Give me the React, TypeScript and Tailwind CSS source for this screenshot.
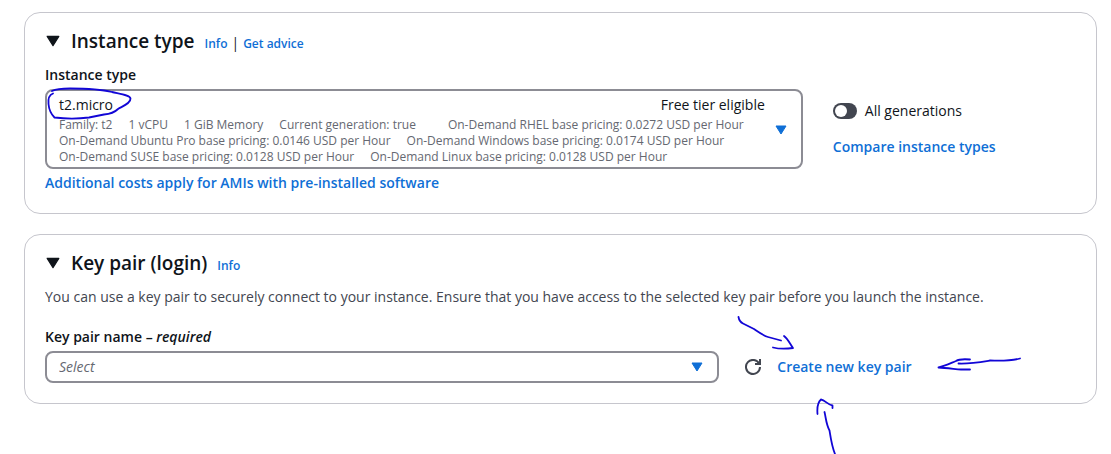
import type { ReactNode } from "react";

const linkClass = "font-semibold text-[#0f6fd6] hover:underline";

function Caret({ className }: { className: string }) {
  return (
    <svg viewBox="0 0 12 10" className={className} aria-hidden="true">
      <path d="M1 1h10L6 9z" fill="currentColor" stroke="currentColor" strokeLinejoin="round" />
    </svg>
  );
}

function Panel({ title, links, children }: { title: string; links: ReactNode; children: ReactNode }) {
  return (
    <section className="rounded-2xl border border-[#c6c6cd] bg-white px-5 pt-4 pb-5">
      <header className="flex h-6 items-center">
        <button type="button" aria-label={"Collapse " + title} className="mr-2.5 flex w-4 justify-center">
          <Caret className="h-3 w-3.5" />
        </button>
        <div className="flex items-baseline gap-2.5">
          <h2 className="text-[19px] leading-6 font-semibold">{title}</h2>
          <div className="flex items-baseline gap-1 text-xs">{links}</div>
        </div>
      </header>
      {children}
    </section>
  );
}

const specs = [
  ["Family: t2", "1 vCPU", "1 GiB Memory", "Current generation: true", "", "On-Demand RHEL base pricing: 0.0272 USD per Hour"],
  ["On-Demand Ubuntu Pro base pricing: 0.0146 USD per Hour", "On-Demand Windows base pricing: 0.0174 USD per Hour"],
  ["On-Demand SUSE base pricing: 0.0128 USD per Hour", "On-Demand Linux base pricing: 0.0128 USD per Hour"],
];

function Annotations() {
  return (
    <svg
      className="pointer-events-none absolute top-0 left-0 h-[454px] w-[1111px]"
      viewBox="0 0 1111 454"
      fill="none"
      stroke="#1206d6"
      strokeWidth="1.8"
      strokeLinecap="round"
      strokeLinejoin="round"
      aria-hidden="true"
    >
      <path d="M53 93.500C49 95 48 99 48.500 104C49 110 51 114 54.500 117.500C66 119 78 119 89 117.500L104 114.500C110 114 115 112 118 109C123 106 131 103 130.500 98.500C130 95 121 94 112 92C100 89 86 88.500 70 88.500C62 88.500 56 89 52 91" />
      <path d="M738.500 317C739 320 740 322 743 323.500L754 329C760 333 764 336 768 337L781 340.500" />
      <path d="M784 336C788 339 790 344 793 348C786 349 779 349 773 347.500" />
      <path d="M1020 358.500C1010 361 1000 361 990 360.500C981 362 970 364 958.500 363.500M970 359.500C964 359 959 359 956 361C951 363 945 366 938.500 367.500C946 368 955 369 961 369.500H970" />
      <path d="M817.500 414C817 408 818 402 821 399.500C825 400 828 405 832.500 405.500V408M824.500 412C826 418 826 424 829.500 430.500C831 440 832 447 835 454" />
    </svg>
  );
}

export default function App() {
  return (
    <main className="relative flex min-h-screen flex-col gap-5 overflow-hidden bg-white py-3 pr-3.5 pl-6 font-['Open_Sans','Noto_Sans',sans-serif] text-sm leading-5 text-[#0f141a]">
      <Panel
        title="Instance type"
        links={
          <>
            <a href="#instance-info" className={linkClass}>Info</a>
            <span className="text-sm">|</span>
            <a href="#advice" className={linkClass}>Get advice</a>
          </>
        }
      >
        <div className="mt-3 flex gap-[30px]">
          <div className="w-[73.5%]">
            <label htmlFor="instance" className="block font-semibold">Instance type</label>
            <button
              id="instance"
              type="button"
              aria-haspopup="listbox"
              className="mt-1 flex w-full items-center rounded-lg border-2 border-[#8c8c94] pt-1 pr-3.5 pb-0.5 pl-3 text-left"
            >
              <span className="flex-1">
                <span className="mb-0.5 flex justify-between">
                  <span>t2.micro</span>
                  <span>Free tier eligible</span>
                </span>
                {specs.map((row) => (
                  <span key={row[0]} className="flex gap-4 text-xs leading-4 whitespace-nowrap text-[#656871]">
                    {row.map((item) => (
                      <span key={item}>{item}</span>
                    ))}
                  </span>
                ))}
              </span>
              <Caret className="ml-2.5 h-2.5 w-3 text-[#0f6fd6]" />
            </button>
            <a href="#costs" className={linkClass + " mt-1 block"}>
              Additional costs apply for AMIs with pre-installed software
            </a>
          </div>
          <div className="flex flex-col items-start gap-4 pt-9">
            <label className="flex items-center gap-2">
              <input
                type="checkbox"
                role="switch"
                className="h-4 w-6 appearance-none rounded-full bg-[#424650] p-0.5 before:block before:size-3 before:rounded-full before:bg-white checked:bg-[#0f6fd6] checked:before:ml-2"
              />
              All generations
            </label>
            <a href="#compare" className={linkClass}>Compare instance types</a>
          </div>
        </div>
      </Panel>

      <Panel title="Key pair (login)" links={<a href="#key-info" className={linkClass}>Info</a>}>
        <p className="mt-3 text-[#424650]">
          You can use a key pair to securely connect to your instance. Ensure that you have access to the selected key pair before you launch the instance.
        </p>
        <label htmlFor="key-pair" className="mt-5 block font-semibold">
          Key pair name – <em>required</em>
        </label>
        <div className="mt-1 flex items-center">
          <div className="grid w-[65.4%] items-center">
            <select
              id="key-pair"
              className="col-start-1 row-start-1 h-8 w-full appearance-none rounded-lg border-2 border-[#8c8c94] bg-white px-3 text-[#656871] italic"
            >
              <option>Select</option>
            </select>
            <Caret className="pointer-events-none col-start-1 row-start-1 mr-4 h-2.5 w-3 justify-self-end text-[#0f6fd6]" />
          </div>
          <button type="button" aria-label="Refresh key pairs" className="ml-[26px] text-[#424650]">
            <svg viewBox="0 0 16 16" className="size-4" fill="none" stroke="currentColor" strokeWidth="2" aria-hidden="true">
              <path d="M10 5h5V0M15 8a7 7 0 1 1-.7-3.100" />
            </svg>
          </button>
          <a href="#create" className={linkClass + " ml-4"}>Create new key pair</a>
        </div>
      </Panel>
      <Annotations />
    </main>
  );
}
